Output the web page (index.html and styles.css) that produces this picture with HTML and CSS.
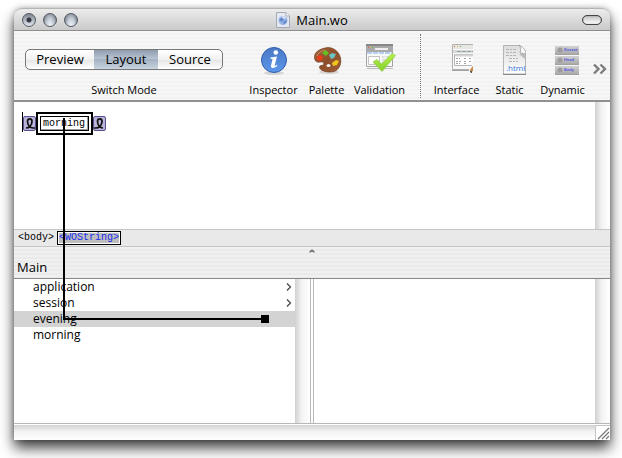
FILE: index.html
```html
<!DOCTYPE html>
<html lang="en">
<head>
<meta charset="utf-8">
<title>Main.wo</title>
<link rel="stylesheet" href="styles.css">
</head>
<body>
<main class="window">
  <header class="titlebar">
    <div class="lights">
      <button class="light edited" aria-label="Close"></button>
      <button class="light" aria-label="Minimize"></button>
      <button class="light" aria-label="Zoom"></button>
    </div>
    <h1 class="title">
      <svg width="14" height="16" viewBox="0 0 14 16" aria-hidden="true">
        <path d="M1 .5h9l3.500 3.500v11.500H.5V.5z" fill="#e4e8f0" stroke="#a4a9b4"/>
        <path d="M10 .5V4h3.500" fill="#fff" stroke="#a4a9b4"/>
        <circle cx="7" cy="8.500" r="4.500" fill="#9ab5e4"/>
        <path d="M3 8l3-3 2 2-2 3zM8 9l3-1-1 3-3 1z" fill="#6389cc"/>
        <path d="M5 5l3-1 2 2-2 1z" fill="#dce8fa"/>
      </svg>
      Main.wo
    </h1>
    <button class="pill" aria-label="Toggle toolbar"></button>
  </header>

  <div class="toolbar">
    <div class="mode">
      <div class="segments">
        <button>Preview</button><button class="on">Layout</button><button>Source</button>
      </div>
      <span class="label">Switch Mode</span>
    </div>
    <div class="tools">
      <button class="tool">
        <svg width="32" height="32" viewBox="0 0 32 32" aria-hidden="true">
          <defs><linearGradient id="blue" x2="0" y2="1"><stop stop-color="#4a78c4"/><stop offset="1" stop-color="#5d97ec"/></linearGradient></defs>
          <ellipse cx="16" cy="29" rx="10" ry="2" fill="#d5d5d5"/>
          <circle cx="16" cy="16" r="12.500" fill="url(#blue)" stroke="#2f5da9"/>
          <circle cx="17.800" cy="8.500" r="2.300" fill="#fff"/>
          <path d="M12.500 13.500l6.500-1-2.200 8.500c-.3 1.300.6 1.300 2-.2l.7.700c-2 2.700-7.300 3.700-6.500.1l1.600-6.600-2.300-.3z" fill="#fff"/>
        </svg>
        <span class="label">Inspector</span>
      </button>
      <button class="tool">
        <svg width="32" height="32" viewBox="0 0 32 32" aria-hidden="true">
          <defs><linearGradient id="wood" x2="1" y2="1"><stop stop-color="#a9653c"/><stop offset=".5" stop-color="#8d4e2b"/><stop offset="1" stop-color="#a15f38"/></linearGradient></defs>
          <ellipse cx="18" cy="28" rx="10" ry="2" fill="#d8d5d3"/>
          <path d="M14 4c7-2 14 3 15.500 10 1.500 8-3 14-10 14-6 0-11-2-11-5 0-2 3-1 4-2.500 1-2-1-3-3-2.500-3 .5-6 0-6-5C3.500 8 8 5.500 14 4z" fill="url(#wood)" stroke="#76401f" stroke-width=".7"/>
          <path d="M6 12c1-3 4-5 8-6" fill="none" stroke="#c48b62"/>
          <ellipse cx="17.500" cy="21.500" rx="2" ry="1.600" fill="#f5f5f5"/>
          <path d="M6 13l3-2 3 2-1 3-4 .5z" fill="#f13a16"/>
          <path d="M11 9l3-3 2 1 2 2-3 3z" fill="#65bd24"/>
          <path d="M18 11l3-2 4 1-2 4-3 1z" fill="#6cc3bd"/>
          <path d="M21 19l4-3 3 1-2 4-4 1z" fill="#f0c51e"/>
        </svg>
        <span class="label">Palette</span>
      </button>
      <button class="tool">
        <svg width="32" height="32" viewBox="0 0 32 32" aria-hidden="true">
          <defs><linearGradient id="green" x2="0" y2="1"><stop stop-color="#b9f04d"/><stop offset="1" stop-color="#82d02a"/></linearGradient></defs>
          <path d="M3 24h26v1H3z" fill="#bbb"/>
          <path d="M2.500.5h26v22h-26z" fill="#f8f8f8" stroke="#a3a3a3"/>
          <path d="M2 0h27v8H2z" fill="#a9a9a9"/>
          <path d="M2 0h27v2H2z" fill="#868686"/>
          <path d="M4 3h1v1H4z" fill="#e65b45"/><path d="M6 3h1v1H6z" fill="#ecc23a"/><path d="M8 3h1v1H8z" fill="#6bb94b"/>
          <path d="M11 4h13v2H11z" fill="#eee"/>
          <path d="M3 9h25" stroke="#6da7ef" stroke-dasharray="5 1"/>
          <path d="M4.500 12.500h11v8h-11z" fill="#fff" stroke="#c3c3c3"/>
          <path d="M18 13h7M18 16h8M18 18.500h6" stroke="#c4c4c4" stroke-dasharray="3 1"/>
          <path d="M9 18l4-2.500 4.500 4.500L28 9.500l3.500 2L18 27.500z" fill="url(#green)" stroke="#8cc84a" stroke-width=".7"/>
        </svg>
        <span class="label">Validation</span>
      </button>
    </div>
    <div class="divider"></div>
    <div class="tools">
      <button class="tool">
        <svg width="32" height="32" viewBox="0 0 32 32" aria-hidden="true">
          <path d="M11 0h21v25H11z" fill="#f8f8f8"/>
          <path d="M32 .5H11.500v25H28" fill="none" stroke="#b0b0b0"/>
          <path d="M12 1h20v4H12z" fill="#e6e6e2"/>
          <path d="M13 2h1v1h-1z" fill="#e05939"/><path d="M16 2h1v1h-1z" fill="#dfb735"/><path d="M19 2h1v1h-1z" fill="#75ac52"/>
          <path d="M12 7.500h20" stroke="#d5dada" stroke-width="3"/>
          <path d="M16 7.500h16" stroke="#9aa2a2" stroke-dasharray="4 1"/>
          <path d="M32 10.500H13.500v11H31" fill="#fff" stroke="#b5b5b5"/>
          <path d="M14 11.500h18" stroke="#d5d5d5" stroke-width="2"/>
          <path d="M15 14.500h4m4 0h2m3 0h3M15 17.500h5m3 0h2m3 0h3M15 19.500h4m4 0h2" stroke="#a2a2a2" stroke-dasharray="2 1"/>
          <path d="M11 26.500h17" stroke="#a0a0a0"/>
          <path d="M32 22l-3 3.500v3l3-1.500z" fill="#c98a4b"/><path d="M29 27h2v2h-1z" fill="#555"/>
        </svg>
        <span class="label">Interface</span>
      </button>
      <button class="tool">
        <svg width="32" height="32" viewBox="0 0 32 32" aria-hidden="true">
          <defs><linearGradient id="paper" x2="0" y2="1"><stop stop-color="#dcdcdc"/><stop offset="1" stop-color="#fff"/></linearGradient></defs>
          <path d="M9.500 1.500h16L31.500 9v21h-22z" fill="url(#paper)" stroke="#b5b5b5"/>
          <path d="M9 30.500h23" stroke="#8a8a8a"/>
          <path d="M25 1c2 2 2 5 1 8l6 1c0-4-3-7-7-9z" fill="#fafafa" stroke="#999" stroke-width=".8"/>
          <path d="M25 10h6v5z" fill="#bbb"/>
          <path d="M12 5.500h10M12 8.500h11M12 11.500h11M15 14.500h9M15 17.500h9" stroke="#b5b5b5" stroke-dasharray="3 1 2 1"/>
          <text class="file-type" x="12" y="27">.html</text>
        </svg>
        <span class="label">Static</span>
      </button>
      <button class="tool">
        <svg width="32" height="32" viewBox="0 0 32 32" aria-hidden="true">
          <defs><linearGradient id="bar" x2="0" y2="1"><stop stop-color="#d2d2d2"/><stop offset="1" stop-color="#a9a9a9"/></linearGradient></defs>
          <g fill="url(#bar)"><path d="M8 2h24v8H8z"/><path d="M8 12h24v8H8z"/><path d="M8 22h24v8H8z"/></g>
          <g fill="#9c9c9c"><circle cx="13" cy="6" r="2.500"/><circle cx="13" cy="16" r="2.500"/><circle cx="13" cy="26" r="2.500"/></g>
          <path d="M8 10.500h24M8 20.500h24M8 30.500h24" stroke="#a2a2a2"/>
          <g class="bar-text"><text x="17" y="7">Docset</text><text x="17" y="17">Head</text><text x="17" y="27">Body</text></g>
        </svg>
        <span class="label">Dynamic</span>
      </button>
    </div>
    <button class="more" aria-label="More tools">
      <svg width="14" height="12" viewBox="0 0 14 12" aria-hidden="true"><path d="M1 1.500L5.500 6 1 10.500M7.500 1.500L12 6l-4.500 4.500" fill="none" stroke="#7c7c7c" stroke-width="2.400"/></svg>
    </button>
  </div>

  <section class="editor">
    <div class="canvas">
      <span class="caret"></span>
      <span class="tag"><svg width="11" height="13" viewBox="0 0 11 13" aria-hidden="true"><path d="M2 11c3 0 6-3 6-6.500S3.500 1 3.500 4.500 6 11 9 11h2" fill="none" stroke="#111" stroke-width="1.700"/></svg></span>
      <span class="binding"><span class="value">morning</span></span>
      <span class="tag"><svg width="11" height="13" viewBox="0 0 11 13" aria-hidden="true"><path d="M0 11h2c3 0 6-3 6-6.500S3.500 1 3.500 4.500 6 11 9 11" fill="none" stroke="#111" stroke-width="1.700"/></svg></span>
    </div>
    <div class="track"></div>
  </section>

  <nav class="path">
    <button>&lt;body&gt;</button>
    <button class="current">&lt;WOString&gt;</button>
  </nav>

  <div class="heading">
    <svg class="grip" width="6" height="5" viewBox="0 0 6 5" aria-hidden="true"><path d="M1 3.500c0-3 4-3 4 0" fill="#999" stroke="#333"/><path d="M1.500 4h3" stroke="#fff"/></svg>
    <h2>Main</h2>
  </div>

  <section class="browser">
    <div class="column">
      <ul>
        <li><button>application<svg width="6" height="8" viewBox="0 0 6 8" aria-hidden="true"><path d="M1 .5L4.500 4 1 7.500" /></svg></button></li>
        <li><button>session<svg width="6" height="8" viewBox="0 0 6 8" aria-hidden="true"><path d="M1 .5L4.500 4 1 7.500" /></svg></button></li>
        <li><button class="selected">evening</button></li>
        <li><button>morning</button></li>
      </ul>
      <div class="track"></div>
    </div>
    <div class="column">
      <ul></ul>
      <div class="track"></div>
    </div>
  </section>

  <footer class="status">
    <div class="scroll"></div>
    <svg width="15" height="15" viewBox="0 0 15 15" aria-hidden="true"><path d="M.5 15V.5H15" fill="none" stroke="#c4c4c4"/><path d="M3 14L14 3M7 14l7-7M11 14l3-3" stroke="#777" stroke-width="1.200"/></svg>
  </footer>

  <svg class="connector" width="208" height="206" viewBox="0 0 208 206" aria-hidden="true"><path d="M2 0v201h200" fill="none" stroke="#000" stroke-width="2"/><path d="M199 197h8v8h-8z"/></svg>
</main>
</body>
</html>
```
FILE: styles.css
```css
* { box-sizing: border-box; }

body {
  margin: 0;
  min-height: 100vh;
  display: flex;
  padding: 8px 12px 18px 14px;
  background: #fff;
  color: #000;
  font-family: "Open Sans", "Noto Sans", sans-serif;
  font-size: 13px;
  overflow: hidden;
}

button {
  margin: 0;
  padding: 0;
  border: 0;
  background: none;
  color: inherit;
  font: inherit;
}

svg { display: block; flex: none; }

h1, h2, ul { margin: 0; padding: 0; font-size: 13px; font-weight: 400; list-style: none; }

.window {
  position: relative;
  flex: 1;
  min-width: 0;
  display: flex;
  flex-direction: column;
  background: #fff;
  border-radius: 8px 8px 0 0;
  box-shadow: 0 8px 14px rgba(0, 0, 0, .75), 0 0 5px rgba(0, 0, 0, .25);
}

.titlebar {
  flex: none;
  height: 23px;
  display: grid;
  grid-template-columns: 1fr auto 1fr;
  align-items: center;
  padding: 0 8px;
  border-top: 1px solid #b5b5b5;
  border-bottom: 1px solid #8e8e8e;
  border-radius: 8px 8px 0 0;
  background: linear-gradient(#ececec, #cacaca);
}

.lights { display: flex; gap: 7px; }

.light {
  width: 14px;
  height: 14px;
  border: 1px solid #535961;
  border-radius: 50%;
  background: radial-gradient(ellipse at 50% 100%, #f3f7fb 0, #c4ccd6 45%, #79818c 85%, #8d959f 100%);
}

.light.edited {
  background: radial-gradient(circle, #34383e 0, #34383e 2px, transparent 3px), linear-gradient(#7d8590, #e1e7ee);
}

.title { display: flex; align-items: center; gap: 6px; line-height: 20px; }

.pill {
  justify-self: end;
  width: 20px;
  height: 10px;
  border: 1px solid #444;
  border-radius: 5px;
  background: linear-gradient(#c3c3c3, #fff);
  box-shadow: inset 0 0 1px #444;
}

.toolbar {
  flex: none;
  height: 71px;
  display: flex;
  padding: 3px 3px 2px 11px;
  border-bottom: 2px solid #909090;
  background: repeating-linear-gradient(#f7f7f7 0, #f7f7f7 2px, #f2f2f2 2px, #f2f2f2 4px);
}

.mode {
  display: flex;
  flex-direction: column;
  align-items: center;
  justify-content: space-between;
  padding-top: 15px;
  margin-right: auto;
}

.segments {
  height: 21px;
  display: flex;
  border: 1px solid #777;
  border-radius: 5px;
  overflow: hidden;
  background: linear-gradient(#fff, #f1f1f1 50%, #e5e5e5 51%, #fff);
}

.segments button { width: 64px; line-height: 19px; }
.segments button:first-child { width: 68px; }
.segments .on { background: linear-gradient(#8f9caf, #b8c3d1 45%, #a3b1c2 50%, #cad4df); }

.label { font-size: 11px; line-height: 16px; white-space: nowrap; }

.tools { display: flex; }

.tool {
  width: 53px;
  display: flex;
  flex-direction: column;
  align-items: center;
  justify-content: space-between;
  padding-top: 10px;
}

.tool .label { display: block; }

.file-type { font: 8px "Open Sans", sans-serif; fill: #3676e5; }
.bar-text { font: bold 4px "Open Sans", sans-serif; fill: #5b5bde; }

.divider { margin: 0 9px 0 14px; border-left: 1px dotted #777; }

.more { width: 14px; margin: 6px 0 0 4px; }

.editor { flex: 127 0 0; display: flex; }
.canvas { flex: 1; display: flex; align-items: flex-start; padding: 10px 8px; }

.caret { width: 1px; height: 20px; background: #000; }

.tag {
  width: 13px;
  height: 15px;
  margin-top: 4px;
  border: 1px solid #54518b;
  border-radius: 2px;
  background: #b9b3d9;
}

.binding { border: 2px solid #000; padding: 2px; background: #fff; }

.value {
  display: block;
  padding: 0 3px 0 2px;
  border: 1px solid #000;
  box-shadow: inset -1px -1px #999;
  font: 10px/13px "Liberation Mono", monospace;
}

.track {
  width: 15px;
  background: linear-gradient(90deg, #d0d0d0, #f3f3f3 45%, #fff);
}

.path {
  flex: none;
  height: 18px;
  display: flex;
  align-items: center;
  gap: 3px;
  padding: 0 4px;
  border-top: 1px solid #c5c5c5;
  border-bottom: 1px solid #c5c5c5;
  background: #e9e9e9;
  font: 10px/12px "Liberation Mono", monospace;
}

.path .current {
  padding: 0 1px;
  border: 1px solid #000;
  box-shadow: inset 0 0 0 1px #fff;
  background: #bdbdbd;
  color: #1a2cf0;
}

.heading {
  flex: none;
  height: 32px;
  display: flex;
  flex-direction: column;
  justify-content: space-between;
  padding: 2px 3px 0;
  border-bottom: 1px solid #888;
  background: repeating-linear-gradient(#f0f0f0 0, #f0f0f0 2px, #eaeaea 2px, #eaeaea 4px);
}

.heading h2 { line-height: 22px; }
.grip { align-self: center; }

.browser { flex: 145 0 0; display: flex; gap: 2px; border-bottom: 1px solid #b7b7b7; }
.column { flex: 1; display: flex; min-width: 0; }
.column:first-child { border-right: 1px solid #b7b7b7; }
.column:last-child { border-left: 1px solid #b7b7b7; }
.column ul { flex: 1; }

.column button {
  width: 100%;
  height: 16px;
  display: flex;
  align-items: center;
  justify-content: space-between;
  padding: 0 3px 0 19px;
  font-size: 12px;
  line-height: 16px;
}

.column path { fill: none; stroke: #444; stroke-width: 1.2px; }
.column .selected { background: #d3d3d3; }

.status { flex: none; display: flex; padding-top: 1px; background: #fff; }
.scroll { flex: 1; background: linear-gradient(#d3d3d3, #f3f3f3 45%, #fff); }

.connector { position: absolute; left: 48px; top: 110px; }
```
